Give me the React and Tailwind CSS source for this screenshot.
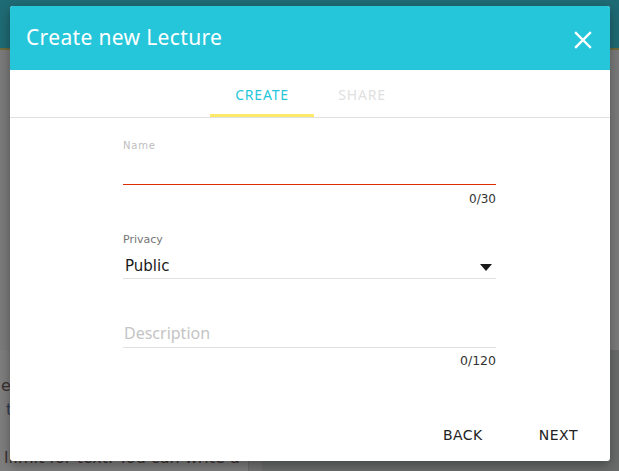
import React from "react";

export default function App() {
  return (
    <div className="relative w-[619px] h-[471px] overflow-hidden bg-[#6f6f6f]" style={{ fontFamily: "'DejaVu Sans', sans-serif" }}>
      {/* background page (dimmed) */}
      <div className="flex flex-col h-full">
        <div className="h-[48px] bg-[#1f6b75] shrink-0" />
        <div className="h-[2px] bg-[#6e6b3c] shrink-0" />
        <div className="h-[300px] bg-[#7b7b7b] shrink-0" />
        <div className="flex flex-1">
          <div className="w-[248px] bg-[#7e7e7e] text-[#3a3030] text-[16px] pt-[24px] leading-[24px]">
            <div className="pl-[1px]">e</div>
            <div className="pl-[6px] text-[#2f3a55]">t</div>
            <div className="mt-[24px] pl-[4px]">li.mit for text. You can write a</div>
          </div>
          <div className="w-[14px] bg-[#737373] border-l border-[#6a6a6a]" />
          <div className="flex-1 bg-[#6a6c6c]" />
        </div>
      </div>

      {/* dialog */}
      <div className="absolute left-[10px] top-[6px] w-[600px] h-[455px] bg-white rounded-[3px] overflow-hidden shadow-[0_4px_12px_rgba(0,0,0,0.35)] flex flex-col">
        <div className="h-[64px] bg-[#26c6da] flex items-center justify-between pl-[16px] pr-[18px] shrink-0">
          <span className="text-white text-[21px] tracking-[0.35px]" style={{ fontFamily: "'Noto Sans', sans-serif" }}>Create new Lecture</span>
          <svg width="18" height="18" viewBox="0 0 18 18" className="mt-[4px]">
            <path d="M2 2 L16 16 M16 2 L2 16" stroke="white" strokeWidth="2.4" strokeLinecap="square" />
          </svg>
        </div>
        <div className="h-[48px] border-b border-[#e0e0e0] flex justify-center shrink-0" style={{ fontFamily: "'Noto Sans', sans-serif" }}>
          <div className="w-[104px] flex flex-col items-center justify-end">
            <span className="text-[#26c6da] text-[14px] tracking-[0.8px] mb-[9px]">CREATE</span>
            <div className="h-[3px] w-full bg-[#fdea6b]" />
          </div>
          <div className="w-[96px] flex flex-col items-center justify-end">
            <span className="text-[#e0e0e0] text-[14px] tracking-[0.8px] mb-[12px]">SHARE</span>
          </div>
        </div>

        <div className="flex-1 flex flex-col">
          <div className="w-[373px] ml-[113px] flex flex-col pt-[22px]">
            <div className="text-[10px] tracking-[0.8px] text-[#bdbdbd] leading-[12px]">Name</div>
            <div className="h-[32px]" />
            <div className="h-[1px] bg-[#dd2c00]" />
            <div className="text-right text-[12px] text-[#333] mt-[7px] leading-[14px]">0/30</div>

            <div className="text-[11px] text-[#757575] mt-[27px] leading-[14px]">Privacy</div>
            <div className="flex items-center justify-between h-[25px] mt-[7px] border-b border-[#e0e0e0] pl-[2px] pr-[4px]">
              <span className="text-[15px] text-[#1a1a1a]">Public</span>
              <svg width="12" height="8" viewBox="0 0 12 8" className="mt-[2px]"><path d="M0 1 L12 1 L6 8 Z" fill="#1a1a1a" /></svg>
            </div>

            <div className="mt-[45px] h-[24px] border-b border-[#e0e0e0] flex items-start">
              <span className="text-[16px] text-[#c4c4c4] pl-[1px] leading-[22px] -mt-[2px]" style={{ fontFamily: "'Noto Sans', sans-serif" }}>Description</span>
            </div>
            <div className="text-right text-[12.5px] text-[#333] mt-[6px] leading-[14px]">0/120</div>
          </div>

          <div className="mt-auto mb-[15px] flex justify-end pr-[32px] gap-[56px] text-[14px] text-[#222] tracking-[0.5px]">
            <span>BACK</span>
            <span>NEXT</span>
          </div>
        </div>
      </div>
    </div>
  );
}
